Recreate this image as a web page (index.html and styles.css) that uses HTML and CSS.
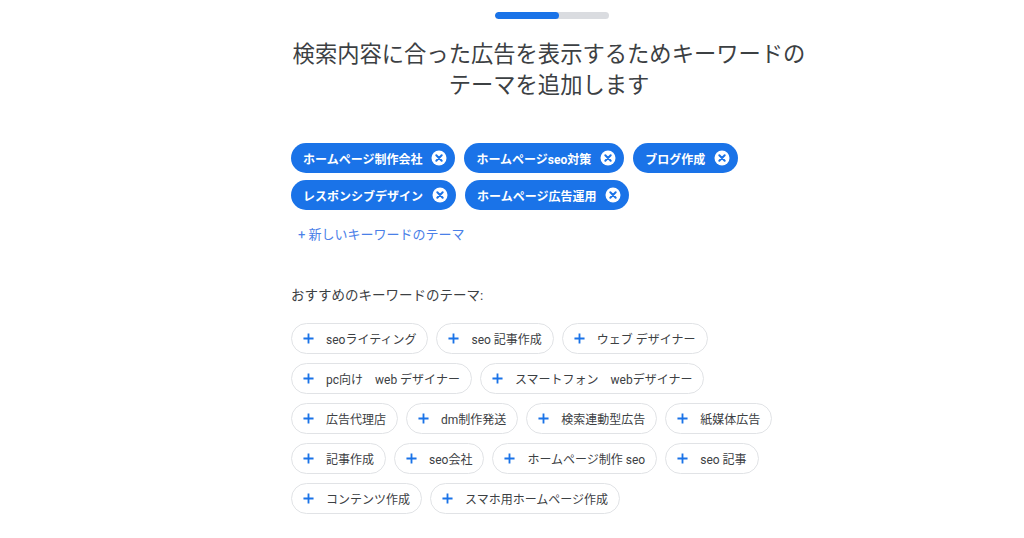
FILE: index.html
```html
<!DOCTYPE html>
<html lang="ja">
<head>
<meta charset="utf-8">
<link rel="stylesheet" href="styles.css">
</head>
<body>
<main class="page">
  <div class="column">
    <div class="progress"><div class="progress-fill" style="width:56%"></div></div>
    <h1 class="title">検索内容に合った広告を表示するためキーワードの<br>テーマを追加します</h1>

    <div class="selected">
      <span class="chip-sel">ホームページ制作会社<span class="x"><svg viewBox="0 0 16 16"><circle cx="8" cy="8" r="7.5" fill="#fff"/><path d="M5.3 5.3l5.4 5.4M10.7 5.3l-5.4 5.4" stroke="#1a73e8" stroke-width="2" stroke-linecap="round"/></svg></span></span>
      <span class="chip-sel">ホームページseo対策<span class="x"><svg viewBox="0 0 16 16"><circle cx="8" cy="8" r="7.5" fill="#fff"/><path d="M5.3 5.3l5.4 5.4M10.7 5.3l-5.4 5.4" stroke="#1a73e8" stroke-width="2" stroke-linecap="round"/></svg></span></span>
      <span class="chip-sel">ブログ作成<span class="x"><svg viewBox="0 0 16 16"><circle cx="8" cy="8" r="7.5" fill="#fff"/><path d="M5.3 5.3l5.4 5.4M10.7 5.3l-5.4 5.4" stroke="#1a73e8" stroke-width="2" stroke-linecap="round"/></svg></span></span>
      <span class="chip-sel">レスポンシブデザイン<span class="x"><svg viewBox="0 0 16 16"><circle cx="8" cy="8" r="7.5" fill="#fff"/><path d="M5.3 5.3l5.4 5.4M10.7 5.3l-5.4 5.4" stroke="#1a73e8" stroke-width="2" stroke-linecap="round"/></svg></span></span>
      <span class="chip-sel">ホームページ広告運用<span class="x"><svg viewBox="0 0 16 16"><circle cx="8" cy="8" r="7.5" fill="#fff"/><path d="M5.3 5.3l5.4 5.4M10.7 5.3l-5.4 5.4" stroke="#1a73e8" stroke-width="2" stroke-linecap="round"/></svg></span></span>
    </div>

    <div class="add-link">+ 新しいキーワードのテーマ</div>

    <div class="rec-label">おすすめのキーワードのテーマ:</div>

    <div class="suggest">
      <span class="chip"><svg class="plus" viewBox="0 0 12 12"><path d="M6 0.5v11M0.5 6h11" stroke="#1a73e8" stroke-width="2"/></svg>seoライティング</span>
      <span class="chip"><svg class="plus" viewBox="0 0 12 12"><path d="M6 0.5v11M0.5 6h11" stroke="#1a73e8" stroke-width="2"/></svg>seo 記事作成</span>
      <span class="chip"><svg class="plus" viewBox="0 0 12 12"><path d="M6 0.5v11M0.5 6h11" stroke="#1a73e8" stroke-width="2"/></svg>ウェブ デザイナー</span>
      <span class="chip"><svg class="plus" viewBox="0 0 12 12"><path d="M6 0.5v11M0.5 6h11" stroke="#1a73e8" stroke-width="2"/></svg>pc向け　web デザイナー</span>
      <span class="chip"><svg class="plus" viewBox="0 0 12 12"><path d="M6 0.5v11M0.5 6h11" stroke="#1a73e8" stroke-width="2"/></svg>スマートフォン　webデザイナー</span>
      <span class="chip"><svg class="plus" viewBox="0 0 12 12"><path d="M6 0.5v11M0.5 6h11" stroke="#1a73e8" stroke-width="2"/></svg>広告代理店</span>
      <span class="chip"><svg class="plus" viewBox="0 0 12 12"><path d="M6 0.5v11M0.5 6h11" stroke="#1a73e8" stroke-width="2"/></svg>dm制作発送</span>
      <span class="chip"><svg class="plus" viewBox="0 0 12 12"><path d="M6 0.5v11M0.5 6h11" stroke="#1a73e8" stroke-width="2"/></svg>検索連動型広告</span>
      <span class="chip"><svg class="plus" viewBox="0 0 12 12"><path d="M6 0.5v11M0.5 6h11" stroke="#1a73e8" stroke-width="2"/></svg>紙媒体広告</span>
      <span class="chip"><svg class="plus" viewBox="0 0 12 12"><path d="M6 0.5v11M0.5 6h11" stroke="#1a73e8" stroke-width="2"/></svg>記事作成</span>
      <span class="chip"><svg class="plus" viewBox="0 0 12 12"><path d="M6 0.5v11M0.5 6h11" stroke="#1a73e8" stroke-width="2"/></svg>seo会社</span>
      <span class="chip"><svg class="plus" viewBox="0 0 12 12"><path d="M6 0.5v11M0.5 6h11" stroke="#1a73e8" stroke-width="2"/></svg>ホームページ制作 seo</span>
      <span class="chip"><svg class="plus" viewBox="0 0 12 12"><path d="M6 0.5v11M0.5 6h11" stroke="#1a73e8" stroke-width="2"/></svg>seo 記事</span>
      <span class="chip"><svg class="plus" viewBox="0 0 12 12"><path d="M6 0.5v11M0.5 6h11" stroke="#1a73e8" stroke-width="2"/></svg>コンテンツ作成</span>
      <span class="chip"><svg class="plus" viewBox="0 0 12 12"><path d="M6 0.5v11M0.5 6h11" stroke="#1a73e8" stroke-width="2"/></svg>スマホ用ホームページ作成</span>
    </div>
  </div>
</main>
</body>
</html>
```

FILE: styles.css
```css
html, body {
  margin: 0;
  padding: 0;
  background: #fff;
}
body {
  font-family: Roboto, "Noto Sans CJK JP", "Noto Sans", sans-serif;
  color: #3c4043;
}
.page {
  padding-left: 80px;
  display: flex;
  justify-content: center;
}
.column {
  width: 522px;
  padding-top: 12px;
}
.progress {
  width: 114px;
  height: 7px;
  margin: 0 auto;
  background: #dadce0;
  border-radius: 4px;
  overflow: hidden;
}
.progress-fill {
  height: 100%;
  background: #1a73e8;
  border-radius: 4px;
}
.title {
  margin: 20px 0 0;
  padding-right: 6px;
  font-size: 22.3px;
  line-height: 31px;
  font-weight: 400;
  text-align: center;
  color: #3c4043;
}
.selected {
  margin-top: 42px;
  display: flex;
  flex-wrap: wrap;
  gap: 7px 9px;
}
.chip-sel {
  display: inline-flex;
  align-items: center;
  height: 30px;
  padding: 0 8px 0 12px;
  border-radius: 15px;
  background: #1a73e8;
  color: #fff;
  font-size: 12px;
  font-weight: 700;
  box-sizing: border-box;
}
.x {
  display: inline-flex;
  margin-left: 9px;
}
.x svg {
  width: 16px;
  height: 16px;
  display: block;
}
.add-link {
  margin-top: 15px;
  padding-left: 7px;
  font-size: 13px;
  line-height: 20px;
  color: #4a80e8;
}
.rec-label {
  margin-top: 40px;
  font-size: 13.5px;
  line-height: 20px;
  color: #3c4043;
}
.suggest {
  margin-top: 18px;
  display: flex;
  flex-wrap: wrap;
  gap: 9px 8px;
}
.chip {
  display: inline-flex;
  align-items: center;
  height: 31px;
  padding: 0 11px 0 11px;
  border: 1px solid #e1e3e6;
  border-radius: 16px;
  background: #fff;
  color: #3c4043;
  font-size: 12px;
  box-sizing: border-box;
  white-space: pre;
}
.plus {
  width: 11px;
  height: 11px;
  margin-right: 12px;
  flex: none;
}
```
